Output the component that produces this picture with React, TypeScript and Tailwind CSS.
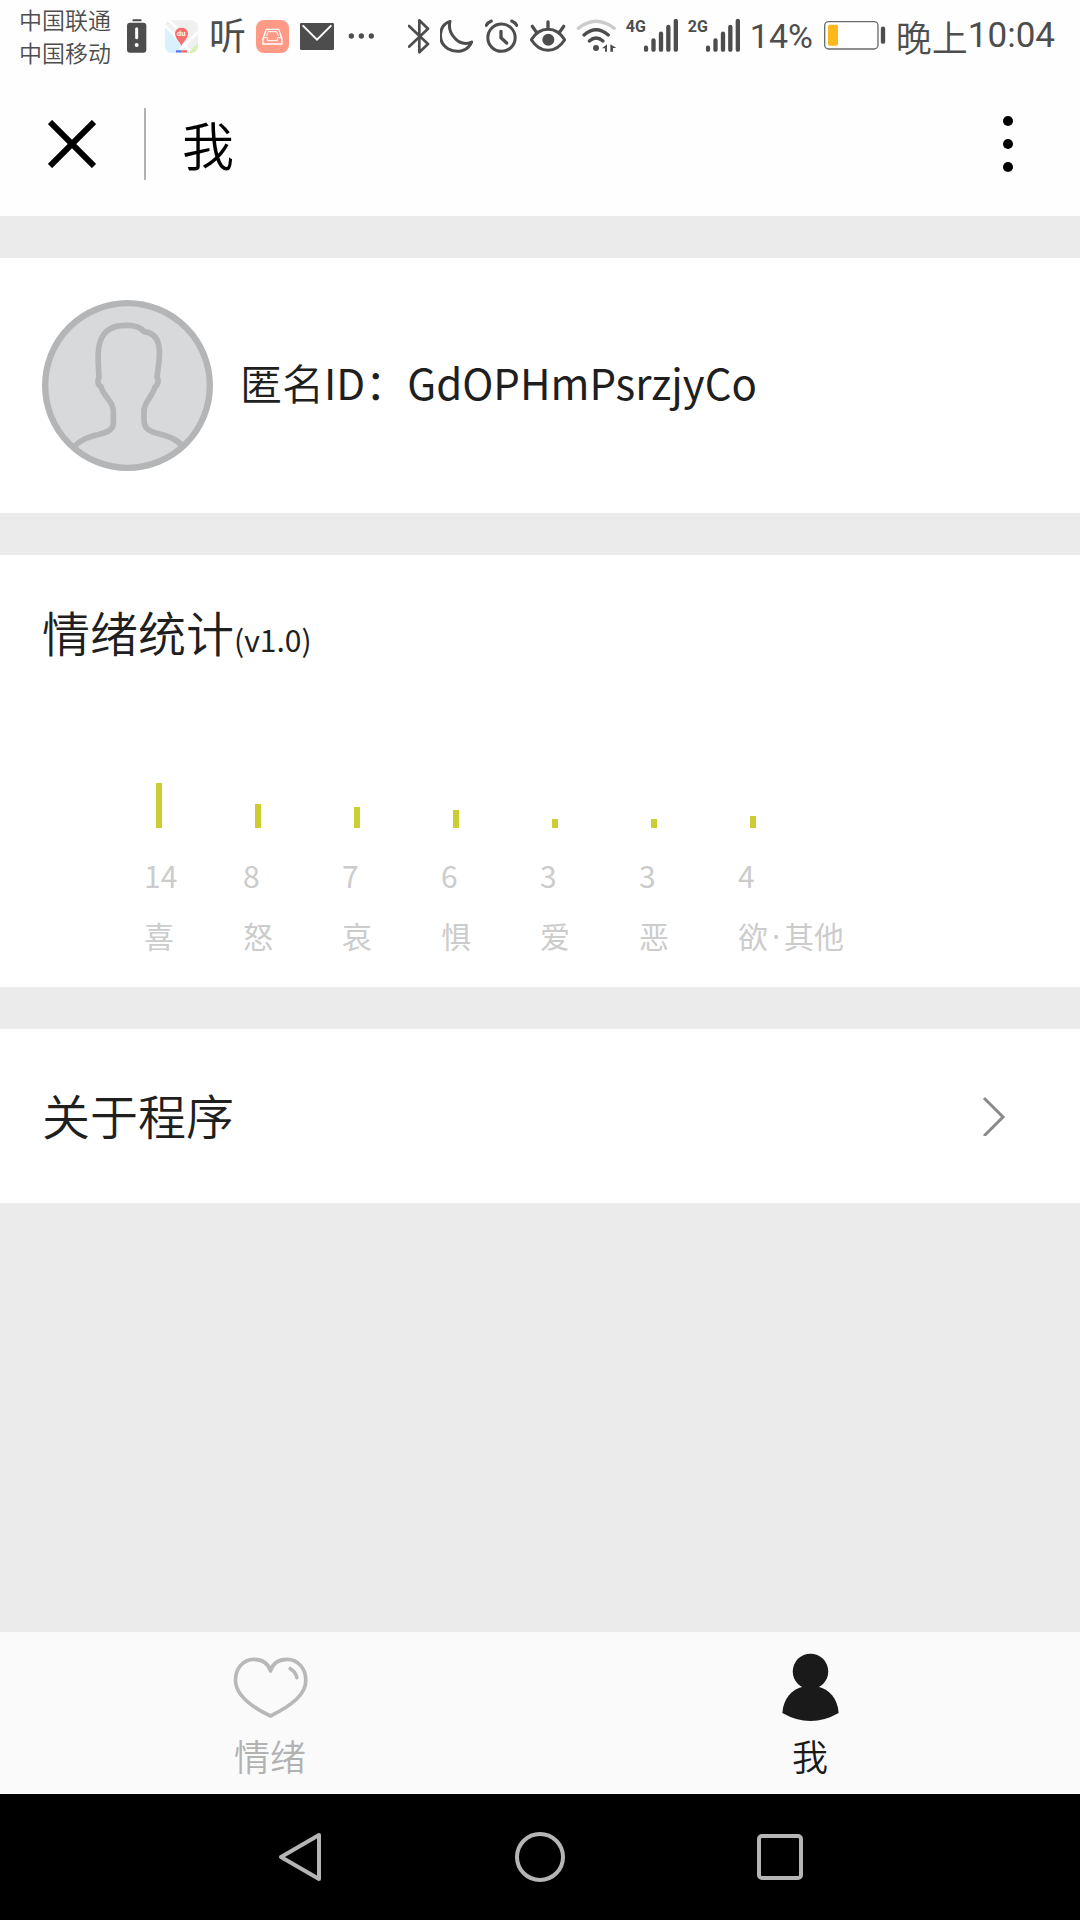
import type { ReactNode } from "react";

interface Emotion {
  id: string;
  name: ReactNode;
  count: number;
  height: number;
}

const EMOTIONS: Emotion[] = [
  { id: "joy", name: "喜", count: 14, height: 45 },
  { id: "anger", name: "怒", count: 8, height: 24 },
  { id: "sorrow", name: "哀", count: 7, height: 21 },
  { id: "fear", name: "惧", count: 6, height: 18 },
  { id: "love", name: "爱", count: 3, height: 9 },
  { id: "hate", name: "恶", count: 3, height: 9 },
  {
    id: "desire",
    name: (
      <>
        欲<span className="px-1 font-['Noto_Sans',sans-serif]">·</span>其他
      </>
    ),
    count: 4,
    height: 12,
  },
];

function Signal({ label }: { label: string }) {
  return (
    <div className="flex h-[34px] w-[52px] items-start">
      <span className="w-[18px] font-['Roboto',sans-serif] text-[16px] leading-4 font-bold">{label}</span>
      <svg viewBox="762 57 102 102" className="h-[34px] w-[34px] shrink-0" aria-hidden>
        <g stroke="#4d4d4d" strokeWidth="13" strokeLinecap="round">
          <path d="M768 143v6M790.500 121v28M813 101v48M835 81v68M857.500 63v86" />
        </g>
      </svg>
    </div>
  );
}

function StatusBar() {
  return (
    <div className="flex h-[72px] items-center justify-between bg-[#fefefe] pr-[25px] pl-[19px] text-[#4d4d4d]">
      <div className="flex items-center gap-[11px]">
        <div className="mr-[5px] flex flex-col text-[23px] leading-[33px] font-[350]">
          <span>中国联通</span>
          <span>中国移动</span>
        </div>
        <svg viewBox="380 58 60 102" className="mr-[7px] h-[34px] w-5" aria-hidden>
          <path d="M399 62h22" stroke="#4d4d4d" strokeWidth="6" strokeLinecap="round" />
          <rect x="380" y="69" width="58" height="90" rx="9" fill="#4d4d4d" />
          <path d="M409 87v27" stroke="#fff" strokeWidth="9" strokeLinecap="round" />
          <circle cx="409" cy="136" r="6" fill="#fff" />
        </svg>
        <svg viewBox="495 60 99 99" className="h-[33px] w-[33px]" aria-hidden>
          <clipPath id="mapClip">
            <rect x="495" y="61" width="99" height="98" rx="20" />
          </clipPath>
          <g clipPath="url(#mapClip)">
            <rect x="495" y="60" width="99" height="99" fill="#f0f0f0" />
            <path d="M495 83L570 159H495Z" fill="#d9f0fd" />
            <path d="M495 77L576 159M506 60L546 100M594 96L540 150" stroke="#fff" strokeWidth="8" fill="none" />
            <path d="M594 128V159H565Z" fill="#d9f2b4" />
            <path d="M528 154h16" stroke="#5a76f0" strokeWidth="7" />
            <path d="M544 154h17" stroke="#f56767" strokeWidth="7" />
            <path d="M544 138C541 126 525 117 525 99A20 20 0 0 1 564 99C564 117 548 126 544 138Z" fill="#fa6e6e" />
            <text x="544" y="107" fontSize="21" fontWeight="700" fill="#fff" textAnchor="middle">
              du
            </text>
          </g>
        </svg>
        <span className="w-9 pb-1 text-[37px] leading-[36px]">听</span>
        <svg viewBox="765 60 99 99" className="h-[33px] w-[33px]" aria-hidden>
          <rect x="765" y="60" width="99" height="99" rx="24" fill="#ff9a86" />
          <g fill="none" stroke="#fff" strokeWidth="4" strokeLinejoin="round">
            <path d="M796 88H833L843 116V132H786V116Z" />
            <path d="M786 113H799V122H829V113H843M801 95H827L832 108M801 95L797 108" strokeWidth="3" />
          </g>
        </svg>
        <svg viewBox="899 60 102 99" className="h-[33px] w-[34px]" aria-hidden>
          <rect x="899" y="69" width="102" height="81" rx="4" fill="#4d4d4d" />
          <path d="M907 76L950 119L993 76" fill="none" stroke="#fff" strokeWidth="6" />
        </svg>
        <svg viewBox="1044 60 81 99" className="ml-[3px] h-[33px] w-[27px]" aria-hidden>
          <g fill="#4d4d4d">
            <circle cx="1054" cy="108" r="8" />
            <circle cx="1084" cy="108" r="8" />
            <circle cx="1114" cy="108" r="8" />
          </g>
        </svg>
      </div>

      <div className="flex items-center gap-[10px]">
        <svg viewBox="54 57 66 105" className="h-[35px] w-[22px]" aria-hidden>
          <path d="M57 78L114 132L88 157V61L114 86L57 140" fill="none" stroke="#4d4d4d" strokeWidth="8" strokeLinecap="round" strokeLinejoin="round" />
        </svg>
        <svg viewBox="153 58 99 102" className="mr-[2px] h-[34px] w-[33px]" aria-hidden>
          <path d="M183 65C147 78 145 128 177 147C204 163 237 154 248 127C230 136 209 130 198 116C184 101 178 84 183 65Z" fill="none" stroke="#4d4d4d" strokeWidth="9" strokeLinejoin="round" />
        </svg>
        <svg viewBox="288 58 99 102" className="mr-[2px] h-[34px] w-[33px]" aria-hidden>
          <g fill="none" stroke="#4d4d4d" strokeWidth="9" strokeLinecap="round">
            <circle cx="337.500" cy="114" r="41" />
            <path d="M336 95V114L353 130" strokeWidth="10" />
            <path d="M292 77Q297 68 307 64M383 77Q378 68 368 64" strokeWidth="9" />
          </g>
        </svg>
        <svg viewBox="423 58 108 102" className="h-[34px] w-9" aria-hidden>
          <g fill="none" stroke="#4d4d4d" strokeWidth="9" strokeLinecap="round" strokeLinejoin="round">
            <path d="M427 120C453 78 501 78 527 120C501 162 453 162 427 120Z" />
            <path d="M477 86V67M441 96L430 80M513 96L524 80" strokeWidth="10" />
          </g>
          <circle cx="478" cy="120" r="18" fill="#4d4d4d" />
        </svg>
        <svg viewBox="558 57 120 102" className="h-[34px] w-10" aria-hidden>
          <g fill="none" strokeWidth="10" strokeLinecap="round">
            <path d="M565 85Q618 42 673 85" stroke="#ccc" />
            <path d="M582 105Q618 73 655 105M598 123Q618 105 639 123" stroke="#4d4d4d" />
          </g>
          <circle cx="618" cy="144" r="9" fill="#4d4d4d" />
          <path d="M636 145L651 133V155H645V145ZM661 155V133L679 144H669V155Z" fill="#4d4d4d" />
        </svg>
        <Signal label="4G" />
        <Signal label="2G" />
        <span className="w-[64px] font-['Roboto',sans-serif] text-[34px] leading-[36px]">14%</span>
        <svg viewBox="250 58 186 102" className="h-[34px] w-[62px]" aria-hidden>
          <rect x="252" y="66" width="160" height="82" rx="12" fill="#fff" stroke="#6b6b6b" strokeWidth="4" />
          <rect x="262" y="75" width="30" height="63" rx="5" fill="#ffb81c" />
          <path d="M427 87v39" stroke="#4d4d4d" strokeWidth="13" strokeLinecap="round" />
        </svg>
        <time className="flex items-center">
          <span className="text-[36px] leading-[36px] font-[350]">晚上</span>
          <span className="font-['Roboto',sans-serif] text-[35px] leading-[36px]">10:04</span>
        </time>
      </div>
    </div>
  );
}

function Header() {
  return (
    <header className="flex h-36 items-center bg-[#fefefe] text-black">
      <button type="button" aria-label="关闭" className="flex h-full w-36 items-center justify-center">
        <svg viewBox="0 0 48 48" className="h-12 w-12" aria-hidden>
          <path d="M2 2L46 46M46 2L2 46" stroke="#000" strokeWidth="6" />
        </svg>
      </button>
      <div className="h-[72px] w-[2px] bg-[#b2b2b2]" />
      <h1 className="ml-9 flex-1 text-[52px] leading-[72px] font-[350]">我</h1>
      <button type="button" aria-label="更多" className="flex h-full w-36 items-center justify-center">
        <svg viewBox="0 0 10 56" className="h-14 w-[10px]" aria-hidden>
          <circle cx="5" cy="5" r="5" />
          <circle cx="5" cy="28" r="5" />
          <circle cx="5" cy="51" r="5" />
        </svg>
      </button>
    </header>
  );
}

function Avatar() {
  return (
    <svg viewBox="66 60 513 513" className="h-[171px] w-[171px] shrink-0" aria-hidden>
      <circle cx="322.500" cy="316.500" r="247" fill="#d8d9db" stroke="#b3b5b7" strokeWidth="19" />
      <path
        d="M162 502C200 452 277 474 280 430V392C279 362 250 350 243 320C232 315 232 300 237 292C234 240 231 198 246 172C264 137 301 136 322 136C342 136 360 138 372 155C403 158 416 180 418 210C420 242 413 270 411 292C417 300 414 316 405 321C397 350 373 365 372 392V422C374 476 451 448 490 502"
        fill="none"
        stroke="#b3b5b7"
        strokeWidth="17"
        strokeLinejoin="round"
      />
    </svg>
  );
}

function EmotionChart() {
  return (
    <ul className="flex pt-[114px] pl-[102px] text-[30px] leading-[60px] text-[#ccc]">
      {EMOTIONS.map((emotion) => (
        <li key={emotion.id} className="flex w-[99px] shrink-0 flex-col whitespace-nowrap">
          <div className="mb-[17px] ml-3 flex h-[45px] items-end">
            <div className="w-[6px] bg-[#cccc33]" style={{ height: emotion.height }} />
          </div>
          <span className="h-[60px]">{emotion.count}</span>
          <span className="h-[60px]">{emotion.name}</span>
        </li>
      ))}
    </ul>
  );
}

function Tab({ label, color, children }: { label: string; color: string; children: ReactNode }) {
  return (
    <a href="#" className={`flex flex-1 flex-col items-center pt-[18px] ${color}`}>
      <div className="flex h-[75px] items-center">{children}</div>
      <span className="text-[36px] leading-[60px] font-[350]">{label}</span>
    </a>
  );
}

function TabBar() {
  return (
    <nav className="flex h-[162px] bg-[#fafafa]">
      <Tab label="情绪" color="text-[#b2b2b2]">
        <svg viewBox="98 112 224 183" className="h-[61px] w-[75px]" aria-hidden>
          <g fill="none" stroke="#b8b8b8" strokeLinejoin="round" strokeLinecap="round">
            <path d="M210 154C203 131 184 119 160 119C126 119 105 148 105 182C105 224 145 258 210 289C276 256 316 224 316 182C316 148 294 119 260 119C236 119 217 131 210 154Z" strokeWidth="11" />
            <path d="M269 147Q285 156 289 174" strokeWidth="11" />
          </g>
        </svg>
      </Tab>
      <Tab label="我" color="text-[#1a1a1a]">
        <svg viewBox="245 101 170 206" className="h-[69px] w-[57px]" aria-hidden>
          <g fill="#1a1a1a">
            <circle cx="330" cy="156" r="53" />
            <path d="M246 280C249 236 275 209 307 202H353C385 209 411 236 414 280Q330 328 246 280Z" />
          </g>
        </svg>
      </Tab>
    </nav>
  );
}

function SystemNav() {
  return (
    <div className="flex h-[126px] items-center justify-center bg-black">
      <button type="button" aria-label="返回" className="flex w-60 justify-center">
        <svg viewBox="0 0 44 50" className="h-[50px] w-11" aria-hidden>
          <path d="M41 3V47L3 25Z" fill="none" stroke="#b5b5b5" strokeWidth="4" strokeLinejoin="round" />
        </svg>
      </button>
      <button type="button" aria-label="主屏幕" className="flex w-60 justify-center">
        <span className="size-[50px] rounded-full border-4 border-[#b5b5b5]" />
      </button>
      <button type="button" aria-label="最近任务" className="flex w-60 justify-center">
        <span className="size-[46px] rounded-[5px] border-4 border-[#b5b5b5]" />
      </button>
    </div>
  );
}

export default function App() {
  return (
    <div className="flex min-h-screen flex-col bg-[#ebebeb] font-['Noto_Sans_CJK_SC',sans-serif] text-[#1f1f1f]">
      <StatusBar />
      <Header />

      <main className="flex flex-1 flex-col gap-[42px] pt-[42px]">
        <section className="flex items-center gap-[27px] bg-white p-[42px]">
          <Avatar />
          <p className="pb-2 text-[42px] leading-[60px] font-[350]">
            匿名<span className="font-normal">ID：GdOPHmPsrzjyCo</span>
          </p>
        </section>

        <section className="bg-white px-[42px] pt-[42px] pb-[22px]">
          <h2 className="pb-1 text-[48px] leading-[68px] font-[350]">
            情绪统计<small className="text-[30px] leading-none font-normal">(v1.0)</small>
          </h2>
          <EmotionChart />
        </section>

        <a href="#" className="flex h-[174px] items-center justify-between bg-white pr-[74px] pl-[42px]">
          <span className="pb-1 text-[48px] leading-[68px] font-[350]">关于程序</span>
          <svg viewBox="0 0 24 40" className="h-10 w-6" aria-hidden>
            <path d="M2 2L21 21L2 40" fill="none" stroke="#8a8a8a" strokeWidth="3" />
          </svg>
        </a>
      </main>

      <TabBar />
      <SystemNav />
    </div>
  );
}
